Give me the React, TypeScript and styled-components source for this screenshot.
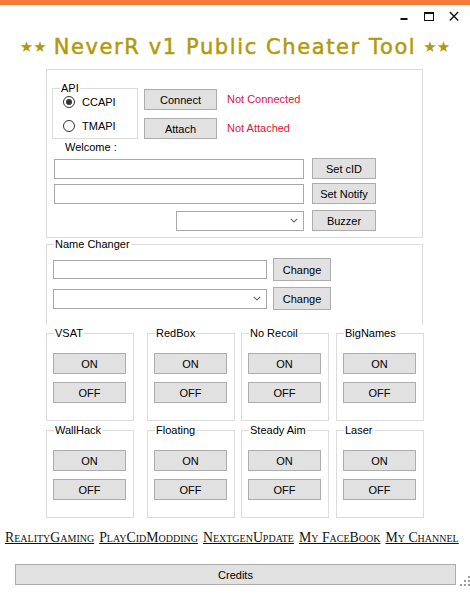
import React from 'react';
import styled, { createGlobalStyle } from 'styled-components';

const GlobalStyle = createGlobalStyle`
  html, body {
    margin: 0;
    padding: 0;
    background: #ffffff;
  }
  body {
    font-family: "Liberation Sans", Arial, sans-serif;
    font-size: 11px;
    color: #000000;
  }
`;

const Window = styled.div`
  width: 470px;
  height: 596px;
  overflow: hidden;
  background: #ffffff;
  display: flex;
  flex-direction: column;
`;

const AccentBar = styled.div`
  height: 5px;
  background: #f47a37;
`;

const ControlBar = styled.div`
  height: 26px;
  display: flex;
  justify-content: flex-end;
  padding-right: 4px;
`;

const ControlButton = styled.div`
  width: 25px;
  display: flex;
  justify-content: center;
  padding-top: 6px;
`;

const Title = styled.h1`
  margin: 0;
  height: 38px;
  box-sizing: border-box;
  padding-bottom: 6px;
  display: flex;
  align-items: center;
  justify-content: center;
  gap: 7px;
  color: #b19a0c;
  font-family: "DejaVu Sans", sans-serif;
  font-weight: normal;
  font-size: 21px;
  letter-spacing: 1.6px;
  -webkit-text-stroke: 0.5px #b19a0c;
`;

const Stars = styled.span`
  font-size: 15px;
  letter-spacing: 0;
  -webkit-text-stroke: 0;
`;

const MainPanel = styled.div`
  margin-left: 46px;
  width: 377px;
  height: 169px;
  box-sizing: border-box;
  border: 1px solid #dcdcdc;
  padding: 12px 0 0 5px;
`;

const GroupBox = styled.fieldset<{ $w: number; $h: number; $open?: boolean }>`
  box-sizing: border-box;
  margin: 0;
  padding: 0;
  min-width: 0;
  width: ${({ $w }) => $w}px;
  height: ${({ $h }) => $h}px;
  border: 1px solid #dcdcdc;
  ${({ $open }) => ($open ? 'border-bottom: none;' : '')}
`;

const Legend = styled.legend`
  margin-left: 7px;
  padding: 0 1px;
  font-size: 11px;
  line-height: 13px;
`;

const GroupBody = styled.div<{ $pl: number }>`
  padding-left: ${({ $pl }) => $pl}px;
  display: flex;
  flex-direction: column;
  align-items: flex-start;
`;

const ConnectRow = styled.div`
  display: flex;
  align-items: flex-start;
`;

const RadioRow = styled.label<{ $mt: number }>`
  display: flex;
  align-items: center;
  gap: 7px;
  height: 13px;
  margin-top: ${({ $mt }) => $mt}px;
`;

const RadioMark = styled.span<{ $on?: boolean }>`
  position: relative;
  width: 12px;
  height: 12px;
  box-sizing: border-box;
  border-radius: 50%;
  border: 1px solid #333333;
  background: #ffffff;

  &::after {
    content: "";
    display: ${({ $on }) => ($on ? 'block' : 'none')};
    position: absolute;
    inset: 2px;
    border-radius: 50%;
    background: #333333;
  }
`;

const Column = styled.div<{ $ml: number }>`
  display: flex;
  flex-direction: column;
  align-items: flex-start;
  margin-left: ${({ $ml }) => $ml}px;
`;

const Button = styled.div<{ $w: number; $h?: number; $mt?: number; $ml?: number }>`
  box-sizing: border-box;
  width: ${({ $w }) => $w}px;
  height: ${({ $h }) => $h ?? 21}px;
  margin-top: ${({ $mt }) => $mt ?? 0}px;
  margin-left: ${({ $ml }) => $ml ?? 0}px;
  flex-shrink: 0;
  display: flex;
  align-items: center;
  justify-content: center;
  background: #e1e1e1;
  border: 1px solid #adadad;
  font-size: 11px;
  color: #000000;
`;

const Status = styled.div<{ $mt: number }>`
  height: 21px;
  line-height: 21px;
  margin-top: ${({ $mt }) => $mt}px;
  color: #dc143c;
`;

const Caption = styled.div`
  margin: 2px 0 0 13px;
  line-height: 13px;
`;

const FieldRow = styled.div<{ $mt: number; $pl: number }>`
  display: flex;
  align-items: center;
  margin-top: ${({ $mt }) => $mt}px;
  padding-left: ${({ $pl }) => $pl}px;
`;

const FieldSlot = styled.div<{ $w: number }>`
  width: ${({ $w }) => $w}px;
  display: flex;
  justify-content: flex-end;
`;

const TextBox = styled.div<{ $w: number; $h?: number }>`
  box-sizing: border-box;
  width: ${({ $w }) => $w}px;
  height: ${({ $h }) => $h ?? 20}px;
  border: 1px solid #a9a9a9;
  background: #ffffff;
`;

const ComboBox = styled(TextBox)`
  display: flex;
  align-items: center;
  justify-content: flex-end;
  padding-right: 5px;
`;

const NamePanel = styled(GroupBox)`
  margin-left: 46px;
`;

const ToggleGrid = styled.div`
  margin: 2px 0 0 46px;
  display: grid;
  grid-template-columns: 101px 94px 95px 88px;
  row-gap: 3px;
`;

const LinkRow = styled.div`
  margin-top: 12px;
  padding-left: 5px;
  display: flex;
  gap: 5px;
  height: 16px;
  align-items: center;
`;

const Link = styled.a`
  font-family: "Liberation Serif", "DejaVu Serif", serif;
  font-variant: small-caps;
  font-size: 13.8px;
  line-height: 16px;
  color: #111111;
  text-decoration: underline;
  text-underline-offset: 1px;
  white-space: nowrap;
`;

const CreditsRow = styled.div`
  margin-top: 18px;
  padding-left: 15px;
  display: flex;
  align-items: flex-end;
`;

const Grip = styled.svg`
  margin: 0 0 -1px 4px;
  display: block;
`;

const ChevronDown = () => (
  <svg width="8" height="5" viewBox="0 0 8 5">
    <path d="M0.8 0.8 L4 4 L7.2 0.8" fill="none" stroke="#6d6d6d" strokeWidth="1.2" />
  </svg>
);

const toggles = ['VSAT', 'RedBox', 'No Recoil', 'BigNames', 'WallHack', 'Floating', 'Steady Aim', 'Laser'];
const links = ['RealityGaming', 'PlayCidModding', 'NextgenUpdate', 'My FaceBook', 'My Channel'];

const ToggleBox: React.FC<{ name: string }> = ({ name }) => (
  <GroupBox $w={88} $h={94}>
    <Legend>{name}</Legend>
    <GroupBody $pl={6}>
      <Button $w={73} $mt={13}>ON</Button>
      <Button $w={73} $mt={8}>OFF</Button>
    </GroupBody>
  </GroupBox>
);

export default function App() {
  return (
    <>
      <GlobalStyle />
      <Window>
        <AccentBar />
        <ControlBar>
          <ControlButton>
            <svg width="10" height="10" viewBox="0 0 10 10">
              <rect x="1.5" y="7" width="7" height="2" fill="#111" />
            </svg>
          </ControlButton>
          <ControlButton>
            <svg width="10" height="10" viewBox="0 0 10 10">
              <rect x="0.5" y="1.5" width="9" height="8" fill="none" stroke="#111" strokeWidth="1" />
              <rect x="0" y="1" width="10" height="2" fill="#111" />
            </svg>
          </ControlButton>
          <ControlButton>
            <svg width="10" height="10" viewBox="0 0 10 10">
              <path d="M0.8 1 L9.2 9.4 M9.2 1 L0.8 9.4" stroke="#111" strokeWidth="1.4" />
            </svg>
          </ControlButton>
        </ControlBar>

        <Title>
          <Stars>★★</Stars>
          <span>NeverR v1 Public Cheater Tool</span>
          <Stars>★★</Stars>
        </Title>

        <MainPanel>
          <ConnectRow>
            <GroupBox $w={86} $h={57}>
              <Legend>API</Legend>
              <GroupBody $pl={10}>
                <RadioRow $mt={0}>
                  <RadioMark $on />
                  CCAPI
                </RadioRow>
                <RadioRow $mt={11}>
                  <RadioMark />
                  TMAPI
                </RadioRow>
              </GroupBody>
            </GroupBox>
            <Column $ml={6}>
              <Button $w={73} $mt={7}>Connect</Button>
              <Button $w={73} $mt={8}>Attach</Button>
            </Column>
            <Column $ml={10}>
              <Status $mt={7}>Not Connected</Status>
              <Status $mt={8}>Not Attached</Status>
            </Column>
          </ConnectRow>
          <Caption>Welcome :</Caption>
          <FieldRow $mt={4} $pl={1}>
            <FieldSlot $w={251}>
              <TextBox $w={250} />
            </FieldSlot>
            <Button $w={64} $ml={8}>Set cID</Button>
          </FieldRow>
          <FieldRow $mt={4} $pl={1}>
            <FieldSlot $w={251}>
              <TextBox $w={250} />
            </FieldSlot>
            <Button $w={64} $ml={8}>Set Notify</Button>
          </FieldRow>
          <FieldRow $mt={6} $pl={1}>
            <FieldSlot $w={251}>
              <ComboBox $w={128}>
                <ChevronDown />
              </ComboBox>
            </FieldSlot>
            <Button $w={64} $ml={8}>Buzzer</Button>
          </FieldRow>
        </MainPanel>

        <NamePanel $w={377} $h={87} $open>
          <Legend>Name Changer</Legend>
          <GroupBody $pl={6}>
            <FieldRow $mt={7} $pl={0}>
              <TextBox $w={214} $h={19} />
              <Button $w={58} $h={23} $ml={6}>Change</Button>
            </FieldRow>
            <FieldRow $mt={6} $pl={0}>
              <ComboBox $w={214}>
                <ChevronDown />
              </ComboBox>
              <Button $w={58} $h={23} $ml={6}>Change</Button>
            </FieldRow>
          </GroupBody>
        </NamePanel>

        <ToggleGrid>
          {toggles.map((name) => (
            <ToggleBox key={name} name={name} />
          ))}
        </ToggleGrid>

        <LinkRow>
          {links.map((label) => (
            <Link key={label}>{label}</Link>
          ))}
        </LinkRow>

        <CreditsRow>
          <Button $w={441}>Credits</Button>
          <Grip width="10" height="10" viewBox="0 0 10 10">
            <rect x="8" y="0" width="2" height="2" fill="#9a9a9a" />
            <rect x="4" y="4" width="2" height="2" fill="#9a9a9a" />
            <rect x="8" y="4" width="2" height="2" fill="#9a9a9a" />
            <rect x="0" y="8" width="2" height="2" fill="#9a9a9a" />
            <rect x="4" y="8" width="2" height="2" fill="#9a9a9a" />
            <rect x="8" y="8" width="2" height="2" fill="#9a9a9a" />
          </Grip>
        </CreditsRow>
      </Window>
    </>
  );
}
